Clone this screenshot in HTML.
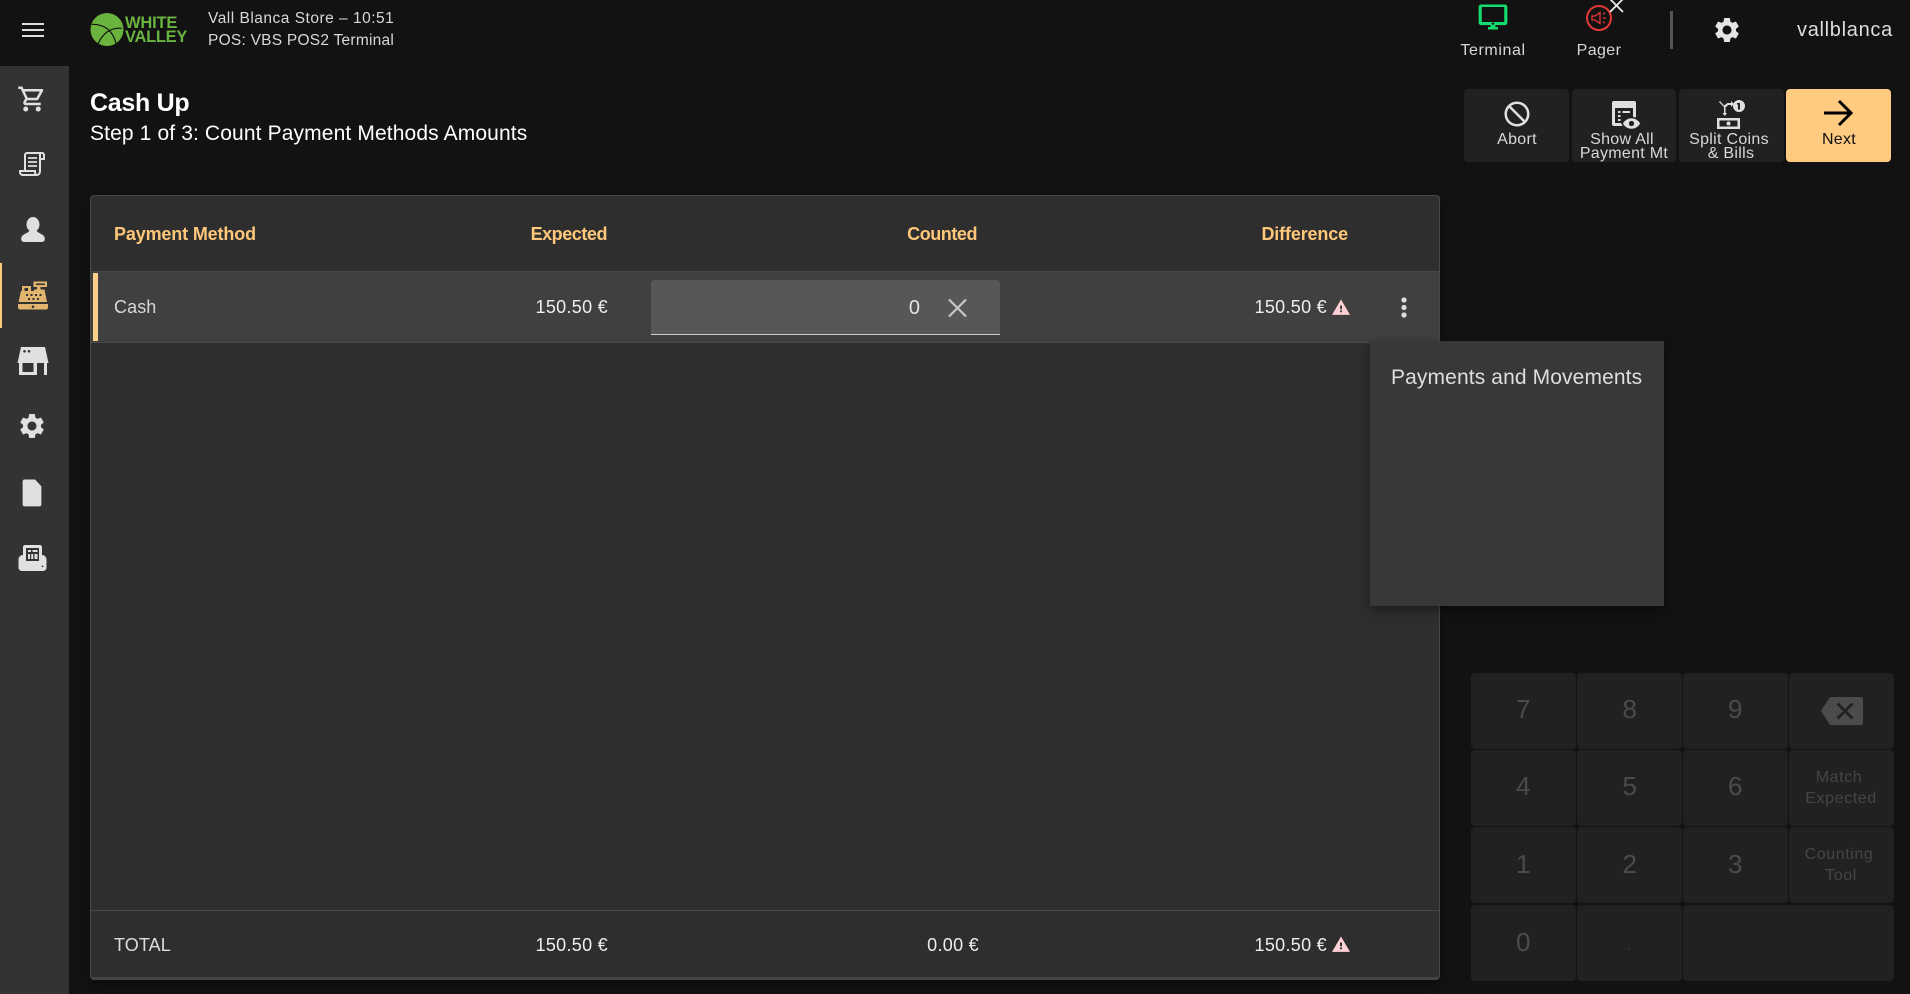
<!DOCTYPE html>
<html><head><meta charset="utf-8"><title>Cash Up</title>
<style>
html,body{margin:0;padding:0;width:1910px;height:994px;overflow:hidden;background:#121212;font-family:"Liberation Sans",sans-serif}
.a{position:absolute}
.t{position:absolute;white-space:nowrap;line-height:24px;height:24px}
.c{width:300px;text-align:center}
svg{position:absolute;display:block}
.b{position:absolute;background:#212121;border-radius:4px}
.n{color:#4b4b4b;font-size:26px;letter-spacing:.5px}
.s{color:#454545;font-size:16px;letter-spacing:.6px}
.h{color:#ffc77a;font-size:18px;font-weight:bold;letter-spacing:-.15px}
.w{color:#eee;font-size:18px;letter-spacing:.3px}
.l{color:#d8d8d8;font-size:16px;letter-spacing:.3px}
</style></head><body>

<!-- sidebar -->
<div class="a" style="left:0;top:66px;width:69px;height:928px;background:#333"></div>
<div class="a" style="left:0;top:263px;width:2px;height:65px;background:#ffcc80"></div>

<svg style="left:20px;top:20px" width="26" height="20" viewBox="0 0 26 20"><path d="M2 3h22v2H2zM2 9h22v2H2zM2 15h22v2H2z" fill="#ddd"/></svg>

<!-- side icons -->
<svg style="left:17px;top:84px" width="30" height="30" viewBox="0 0 24 24" fill="#e0e0e0"><path d="M15.55 13c.75 0 1.41-.41 1.75-1.03l3.58-6.49A.996.996 0 0 0 20.01 4H5.21l-.94-2H1v2h2l3.6 7.59-1.35 2.44C4.52 15.37 5.48 17 7 17h12v-2H7l1.1-2h7.45zM6.16 6h12.15l-2.76 5H8.53L6.16 6zM7 18c-1.1 0-1.99.9-1.99 2S5.9 22 7 22s2-.9 2-2-.9-2-2-2zm10 0c-1.1 0-1.99.9-1.99 2s.89 2 1.99 2 2-.9 2-2-.9-2-2-2z"/></svg>
<svg style="left:18px;top:150px" width="30" height="30" viewBox="0 0 30 30" fill="none" stroke="#e0e0e0" stroke-width="2"><path d="M7 21V5c0-1 .8-2 2-2h15c1.500 0 2 1 2 2.500V9h-4"/><path d="M22 3v18c0 2.500-1.500 4-3 4H5c-2 0-3-1.500-3-3v-1h15v1c0 1.500.8 3 2 3"/><path d="M10 8h9M10 12h9M10 16h9" stroke-width="1.800"/></svg>
<svg style="left:20px;top:216px" width="26" height="28" viewBox="0 0 26 28" fill="#e0e0e0"><ellipse cx="13" cy="8.500" rx="6.500" ry="7.500"/><path d="M9 15h8c.5 2 6 2.800 7.500 6 .8 2.500.2 5-3 5H4.500c-3.200 0-3.800-2.500-3-5C3 17.800 8.500 17 9 15z"/></svg>
<svg style="left:17px;top:280px" width="32" height="32" viewBox="0 0 32 32" fill="#e2b56e"><path d="M5 6h9v5h3v-1.500h3V7h-3.500V1.500H30V7h-6.500v2.500h4L30 22H1.500L4 11h1zM7.500 8v3H11V8zM19 3.500V5h9V3.500zM9 14v2h2v-2zm4.500 0v2h2v-2zm4.500 0v2h2v-2zm4.500 0v2h2v-2zM11 18v2h2v-2zm4.500 0v2h2v-2zm4.500 0v2h2v-2z" fill-rule="evenodd"/><path d="M1 24h30v3.500c0 1-.8 2-2 2H3c-1.200 0-2-1-2-2zm15 1.500a1.300 1.300 0 1 0 0 2.600 1.300 1.300 0 0 0 0-2.600z" fill-rule="evenodd"/></svg>
<svg style="left:17px;top:346px" width="32" height="30" viewBox="0 0 32 30" fill="#e0e0e0"><path fill-rule="evenodd" d="M4 1h24l3.500 16h-31zM7.500 4a1.300 1.300 0 1 0 0 2.600 1.300 1.300 0 0 0 0-2.600zm4.500 0a1.300 1.300 0 1 0 0 2.600 1.300 1.300 0 0 0 0-2.600z"/><path d="M2 17h3.500v12H2zM27 17h3v12h-3zM5 26h15v3H5zM16.500 17H20v9h-3.500z"/></svg>
<svg style="left:17px;top:411px" width="30" height="30" viewBox="0 0 24 24" fill="#e0e0e0"><path d="M19.14 12.94c.04-.3.06-.61.06-.94 0-.32-.02-.64-.07-.94l2.03-1.58c.18-.14.23-.41.12-.61l-1.92-3.32c-.12-.22-.37-.29-.59-.22l-2.39.96c-.5-.38-1.03-.7-1.62-.94l-.36-2.54c-.04-.24-.24-.41-.48-.41h-3.84c-.24 0-.43.17-.47.41l-.36 2.54c-.59.24-1.13.57-1.62.94l-2.39-.96c-.22-.08-.47 0-.59.22L2.74 8.87c-.12.21-.08.47.12.61l2.03 1.58c-.05.3-.09.63-.09.94s.02.64.07.94l-2.03 1.58c-.18.14-.23.41-.12.61l1.92 3.32c.12.22.37.29.59.22l2.39-.96c.5.38 1.03.7 1.62.94l.36 2.54c.05.24.24.41.48.41h3.84c.24 0 .44-.17.47-.41l.36-2.54c.59-.24 1.13-.56 1.62-.94l2.39.96c.22.08.47 0 .59-.22l1.92-3.32c.12-.22.07-.47-.12-.61l-2.01-1.58zM12 15.6c-1.98 0-3.6-1.62-3.6-3.6s1.62-3.6 3.6-3.6 3.6 1.62 3.6 3.6-1.62 3.6-3.6 3.6z"/></svg>
<svg style="left:17px;top:477px" width="30" height="32" viewBox="0 0 24 25.600" fill="#e0e0e0"><path d="M14.500 2H6c-1.100 0-1.500.9-1.500 2v17.500c0 1.100.4 2 1.500 2h12c1.100 0 1.500-.9 1.500-2V7.500z"/></svg>
<svg style="left:18px;top:543px" width="30" height="30" viewBox="0 0 30 30" fill="#e0e0e0"><path fill-rule="evenodd" d="M7 2h15c1 0 2 .8 2 2v8c2.500 0 4.500 2 4.500 4.500v8c0 2-1.500 3.500-3.500 3.500H4c-2 0-3.500-1.500-3.500-3.500v-8C.5 14 2.500 12 5 12V4c0-1.200 1-2 2-2zm1 3v13h13V5zm2 2h3v2h-3zm4.500 0h5v2h-5zM10 11h2v5h-2zm3.200 0h2v5h-2zm3.300 0h3v5h-3zM24.500 22.500a.9.900 0 1 0 0 1.800.9.900 0 0 0 0-1.800z"/></svg>

<!-- logo -->
<svg style="left:89px;top:12px" width="36" height="36" viewBox="0 0 36 36"><circle cx="18" cy="17.500" r="16.500" fill="#6ab33f"/><path d="M2.700 12.300Q22 12 27 31.300M32.700 16.300Q17 15 9.300 31.300" stroke="#121212" stroke-width="1.200" fill="none"/></svg>
<div class="t" style="left:125px;top:11px;color:#6ab33f;font-size:16.500px;font-weight:bold;letter-spacing:-.2px">WHITE</div>
<div class="t" style="left:125px;top:25px;color:#6ab33f;font-size:16.500px;font-weight:bold;letter-spacing:-.3px">VALLEY</div>
<div class="t l" style="left:208px;top:7px;font-size:15.500px;letter-spacing:.5px">Vall Blanca Store – 10:51</div>
<div class="t l" style="left:208px;top:29px;font-size:15.500px;letter-spacing:.25px">POS: VBS POS2 Terminal</div>

<!-- top right -->
<svg style="left:1478px;top:2px" width="30" height="30" viewBox="0 0 24 24" fill="#14dc6e"><path fill-rule="evenodd" d="M21.500 2h-19C1.500 2 .5 2.900.5 4v12.500c0 1.100 1 2 2 2H10V20H8v2h8v-2h-2v-1.500h7.500c1 0 2-.9 2-2V4c0-1.100-.9-2-2-2zM21 16H3V4h18zM11 16.500h2V18h-2z"/></svg>
<div class="t c l" style="left:1343px;top:39px;letter-spacing:.6px">Terminal</div>
<svg style="left:1584px;top:3px" width="30" height="30" viewBox="0 0 30 30" fill="none" stroke="#e53935"><circle cx="15" cy="15" r="12" stroke-width="2"/><path d="M8 13h3l5-3.500v11L11 17H8z" stroke-width="1.300"/><path d="M19 11l2-1M19 15h3M19 19l2 1" stroke-width="1.300"/></svg>
<svg style="left:1608px;top:-2px" width="18" height="16" viewBox="0 0 18 16" stroke="#e8e8e8" stroke-width="1.800"><path d="M2 1l13 13M15 1L2 14"/></svg>
<div class="t c l" style="left:1449px;top:39px;letter-spacing:.4px">Pager</div>
<div class="a" style="left:1670px;top:11px;width:3px;height:38px;background:#555"></div>
<svg style="left:1712px;top:15px" width="30" height="30" viewBox="0 0 24 24" fill="#e4e4e4"><path d="M19.14 12.94c.04-.3.06-.61.06-.94 0-.32-.02-.64-.07-.94l2.03-1.58c.18-.14.23-.41.12-.61l-1.92-3.32c-.12-.22-.37-.29-.59-.22l-2.39.96c-.5-.38-1.03-.7-1.62-.94l-.36-2.54c-.04-.24-.24-.41-.48-.41h-3.84c-.24 0-.43.17-.47.41l-.36 2.54c-.59.24-1.13.57-1.62.94l-2.39-.96c-.22-.08-.47 0-.59.22L2.74 8.87c-.12.21-.08.47.12.61l2.03 1.58c-.05.3-.09.63-.09.94s.02.64.07.94l-2.03 1.58c-.18.14-.23.41-.12.61l1.92 3.32c.12.22.37.29.59.22l2.39-.96c.5.38 1.03.7 1.62.94l.36 2.54c.05.24.24.41.48.41h3.84c.24 0 .44-.17.47-.41l.36-2.54c.59-.24 1.13-.56 1.62-.94l2.39.96c.22.08.47 0 .59-.22l1.92-3.32c.12-.22.07-.47-.12-.61l-2.01-1.58zM12 15.6c-1.98 0-3.6-1.62-3.6-3.6s1.62-3.6 3.6-3.6 3.6 1.62 3.6 3.6-1.62 3.6-3.6 3.6z"/></svg>
<div class="t" style="left:1797px;top:18px;color:#ddd;font-size:20px;letter-spacing:.7px">vallblanca</div>

<!-- title -->
<div class="t" style="left:90px;top:91px;color:#fff;font-size:25px;font-weight:bold;letter-spacing:-.3px">Cash Up</div>
<div class="t" style="left:90px;top:122px;color:#fff;font-size:21px;letter-spacing:.13px">Step 1 of 3: Count Payment Methods Amounts</div>

<!-- action buttons -->
<div class="b" style="left:1464px;top:89px;width:105px;height:73px"></div>
<div class="b" style="left:1572px;top:89px;width:104px;height:73px"></div>
<div class="b" style="left:1679px;top:89px;width:105px;height:73px"></div>
<div class="b" style="left:1786px;top:89px;width:105px;height:73px;background:#ffcb80"></div>
<svg style="left:1502px;top:99px;transform:scaleX(-1)" width="30" height="30" viewBox="0 0 24 24" fill="#e0e0e0"><path d="M12 2C6.48 2 2 6.48 2 12s4.48 10 10 10 10-4.480 10-10S17.52 2 12 2zM4 12c0-4.420 3.580-8 8-8 1.850 0 3.550.63 4.900 1.690L5.690 16.900C4.630 15.550 4 13.850 4 12zm8 8c-1.850 0-3.550-.63-4.900-1.690L18.310 7.100C19.370 8.450 20 10.150 20 12c0 4.420-3.580 8-8 8z"/></svg>
<svg style="left:1610px;top:100px" width="32" height="30" viewBox="0 0 32 30"><path fill="#e0e0e0" fill-rule="evenodd" d="M4 1h20c1.300 0 2 .8 2 2v20c0 1.200-.8 2-2 2v1H4c-1.200 0-2-.8-2-2V3c0-1.200.8-2 2-2zm1 7v15h18V8z"/><path fill="#e0e0e0" d="M8 11h2.500v2H8zM12.500 11H20v2h-7.500zM8 15h2.500v2H8zM8 19h2.500v2H8z"/><path fill="#e0e0e0" stroke="#212121" stroke-width="1.500" d="M21.500 17.500c4 0 7.500 2.400 9.500 6-2 3.600-5.500 6-9.500 6s-7.500-2.400-9.500-6c2-3.600 5.500-6 9.500-6z"/><circle cx="21.500" cy="23.500" r="2.600" fill="#212121"/></svg>
<svg style="left:1716px;top:99px" width="30" height="32" viewBox="0 0 30 32" fill="#e0e0e0"><path d="M3 3l5 5v6H6.500l2.300 3 2.200-3H9.500V8.500L12 6h3v2l3-3-3-3v2h-3.500L8 6.500 4 2z"/><path fill-rule="evenodd" d="M26 2a6 6 0 1 1 0 12 6 6 0 0 1 0-12zm-2 3v1.500h1v5h2V5z" transform="translate(-3 -1)"/><path fill-rule="evenodd" d="M1 19h23v11H1zm2.500 2.500v6h18v-6zM12.500 22.500a2 2 0 1 0 0 4 2 2 0 0 0 0-4z"/></svg>
<svg style="left:1820px;top:95px" width="36" height="36" viewBox="0 0 36 36" fill="none" stroke="#000" stroke-width="3"><path d="M4 18h27M19 6l12 12-12 12"/></svg>

<div class="t c l" style="left:1367px;top:128px">Abort</div>
<div class="t c l" style="left:1472px;top:128px">Show All</div>
<div class="t c l" style="left:1474px;top:142px">Payment Mt</div>
<div class="t c l" style="left:1579px;top:128px">Split Coins</div>
<div class="t c l" style="left:1581px;top:142px">&amp; Bills</div>
<div class="t c l" style="left:1689px;top:128px;color:#111">Next</div>

<!-- card -->
<div class="a" style="left:90px;top:195px;width:1350px;height:785px;box-sizing:border-box;background:#2e2e2e;border:1px solid #484848;border-bottom:3px solid #454545;border-radius:4px;box-shadow:0 4px 8px rgba(0,0,0,.35)"></div>
<div class="a" style="left:91px;top:271px;width:1348px;height:1px;background:#474747"></div>
<div class="a" style="left:91px;top:272px;width:1348px;height:70px;background:#404040"></div>
<div class="a" style="left:91px;top:342px;width:1348px;height:1px;background:#4a4a4a"></div>
<div class="a" style="left:93px;top:273px;width:5px;height:68px;background:#ffd08a"></div>
<div class="a" style="left:91px;top:910px;width:1348px;height:1px;background:#484848"></div>

<div class="t h" style="left:114px;top:222px">Payment Method</div>
<div class="t h" style="right:1303px;top:222px;letter-spacing:-.45px">Expected</div>
<div class="t h" style="right:933px;top:222px;letter-spacing:-.45px">Counted</div>
<div class="t h" style="right:562px;top:222px">Difference</div>

<div class="t" style="left:114px;top:295px;color:#d8d8d8;font-size:18px;letter-spacing:.1px">Cash</div>
<div class="t w" style="right:1302px;top:295px">150.50 €</div>
<div class="a" style="left:651px;top:280px;width:349px;height:55px;box-sizing:border-box;background:#575757;border-bottom:1px solid #ccc;border-radius:4px 4px 0 0"></div>
<div class="t" style="right:990px;top:296px;color:#e4e4e4;font-size:20px">0</div>
<svg style="left:947px;top:298px" width="20" height="20" viewBox="0 0 20 20" stroke="#c8c8c8" stroke-width="2.200"><path d="M2 1.500l17 17M19 1.500l-17 17"/></svg>
<div class="t w" style="right:583px;top:295px">150.50 €</div>
<svg style="left:1332px;top:298px" width="18" height="18" viewBox="0 0 24 24" fill="#ffd0d4"><path d="M0 22.500h24L12 2zM13.300 19h-2.600v-2.500h2.600zm0-4h-2.600v-5h2.600z" fill-rule="evenodd"/></svg>
<svg style="left:1398px;top:296px" width="12" height="24" viewBox="0 0 12 24" fill="#ddd"><circle cx="6" cy="4" r="2.600"/><circle cx="6" cy="11.500" r="2.600"/><circle cx="6" cy="19" r="2.600"/></svg>

<div class="t" style="left:114px;top:933px;color:#ddd;font-size:18px;letter-spacing:.1px">TOTAL</div>
<div class="t w" style="right:1302px;top:933px">150.50 €</div>
<div class="t w" style="right:931px;top:933px">0.00 €</div>
<div class="t w" style="right:583px;top:933px">150.50 €</div>
<svg style="left:1332px;top:935px" width="18" height="18" viewBox="0 0 24 24" fill="#ffd0d4"><path d="M0 22.500h24L12 2zM13.300 19h-2.600v-2.500h2.600zm0-4h-2.600v-5h2.600z" fill-rule="evenodd"/></svg>

<!-- popover -->
<div class="a" style="left:1370px;top:341px;width:294px;height:265px;background:#383838;box-shadow:0 4px 12px rgba(0,0,0,.4)"></div>
<div class="t" style="left:1391px;top:366px;color:#dedede;font-size:21px;letter-spacing:.12px">Payments and Movements</div>

<!-- numpad -->
<div class="b" style="left:1471px;top:673px;width:105px;height:76px"></div>
<div class="b" style="left:1577px;top:673px;width:105px;height:76px"></div>
<div class="b" style="left:1683px;top:673px;width:105px;height:76px"></div>
<div class="b" style="left:1789px;top:673px;width:105px;height:76px"></div>
<div class="b" style="left:1471px;top:750px;width:105px;height:76px"></div>
<div class="b" style="left:1577px;top:750px;width:105px;height:76px"></div>
<div class="b" style="left:1683px;top:750px;width:105px;height:76px"></div>
<div class="b" style="left:1789px;top:750px;width:105px;height:76px"></div>
<div class="b" style="left:1471px;top:827px;width:105px;height:76px"></div>
<div class="b" style="left:1577px;top:827px;width:105px;height:76px"></div>
<div class="b" style="left:1683px;top:827px;width:105px;height:76px"></div>
<div class="b" style="left:1789px;top:827px;width:105px;height:76px"></div>
<div class="b" style="left:1471px;top:905px;width:105px;height:76px"></div>
<div class="b" style="left:1577px;top:905px;width:105px;height:76px"></div>
<div class="b" style="left:1683px;top:905px;width:211px;height:76px"></div>

<div class="t c n" style="left:1373.500px;top:697px">7</div>
<div class="t c n" style="left:1480px;top:697px">8</div>
<div class="t c n" style="left:1585.500px;top:697px">9</div>
<div class="t c n" style="left:1373.500px;top:774px">4</div>
<div class="t c n" style="left:1480px;top:774px">5</div>
<div class="t c n" style="left:1585.500px;top:774px">6</div>
<div class="t c n" style="left:1373.500px;top:852px">1</div>
<div class="t c n" style="left:1480px;top:852px">2</div>
<div class="t c n" style="left:1585.500px;top:852px">3</div>
<div class="t c n" style="left:1373.500px;top:930px">0</div>
<div class="t c" style="left:1479px;top:933px;color:#454545;font-size:14px">.</div>
<svg style="left:1821px;top:697px" width="42" height="28" viewBox="0 0 42 28"><path fill="#4b4b4b" fill-rule="evenodd" d="M9 0h31c1.200 0 2 .8 2 2v24c0 1.200-.8 2-2 2H9L0 14zm8.500 5.500l-2 2 6.500 6.500-6.500 6.500 2 2 6.500-6.500 6.500 6.500 2-2-6.500-6.500 6.500-6.500-2-2-6.500 6.500z"/></svg>
<div class="t c s" style="left:1689px;top:766px">Match</div>
<div class="t c s" style="left:1691px;top:787px">Expected</div>
<div class="t c s" style="left:1689px;top:843px">Counting</div>
<div class="t c s" style="left:1691px;top:864px">Tool</div>

</body></html>
